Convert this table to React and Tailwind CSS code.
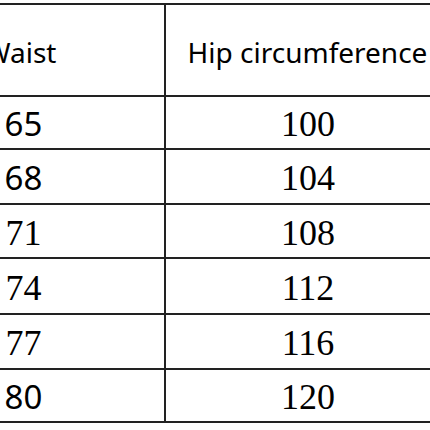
import React from "react";

const rows = [
  { w: "65", h: "100", h_: 51, wSans: true },
  { w: "68", h: "104", h_: 53, wSans: true },
  { w: "71", h: "108", h_: 52, wSans: false },
  { w: "74", h: "112", h_: 54, wSans: false },
  { w: "77", h: "116", h_: 53, wSans: false },
  { w: "80", h: "120", h_: 51, wSans: true },
];

export default function App() {
  return (
    <div className="w-[430px] h-[430px] overflow-hidden bg-white">
      <div className="mt-[3px] ml-[-119px] w-[575px] border-t-2 border-[#222] text-black">
        <div className="flex h-[92px] border-b-2 border-[#222]">
          <div className="w-[285px] border-r-2 border-[#222] flex items-center justify-center pt-[4px] pr-[4px] font-['Noto_Sans','Noto_Sans_CJK_SC',sans-serif] text-[28px]">
            Waist
          </div>
          <div className="w-[288px] flex items-center justify-center pt-[4px] pr-[5px] font-['Noto_Sans','Noto_Sans_CJK_SC',sans-serif] text-[28px]">
            Hip circumference
          </div>
        </div>
        {rows.map((r, i) => (
          <div
            key={i}
            className="flex border-b-2 border-[#222]"
            style={{ height: r.h_ + 2 }}
          >
            <div
              className={
                r.wSans
                  ? "w-[285px] border-r-2 border-[#222] flex items-center justify-center pt-[3px] pl-[2px] font-['Noto_Sans',sans-serif] text-[33px]"
                  : "w-[285px] border-r-2 border-[#222] flex items-center justify-center pt-[3px] pl-[2px] font-['Liberation_Serif',serif] text-[36px]"
              }
            >
              {r.w}
            </div>
            <div className="w-[288px] flex items-center justify-center pt-[3px] pr-[4px] font-['Liberation_Serif',serif] text-[36px]">
              {r.h}
            </div>
          </div>
        ))}
      </div>
    </div>
  );
}
